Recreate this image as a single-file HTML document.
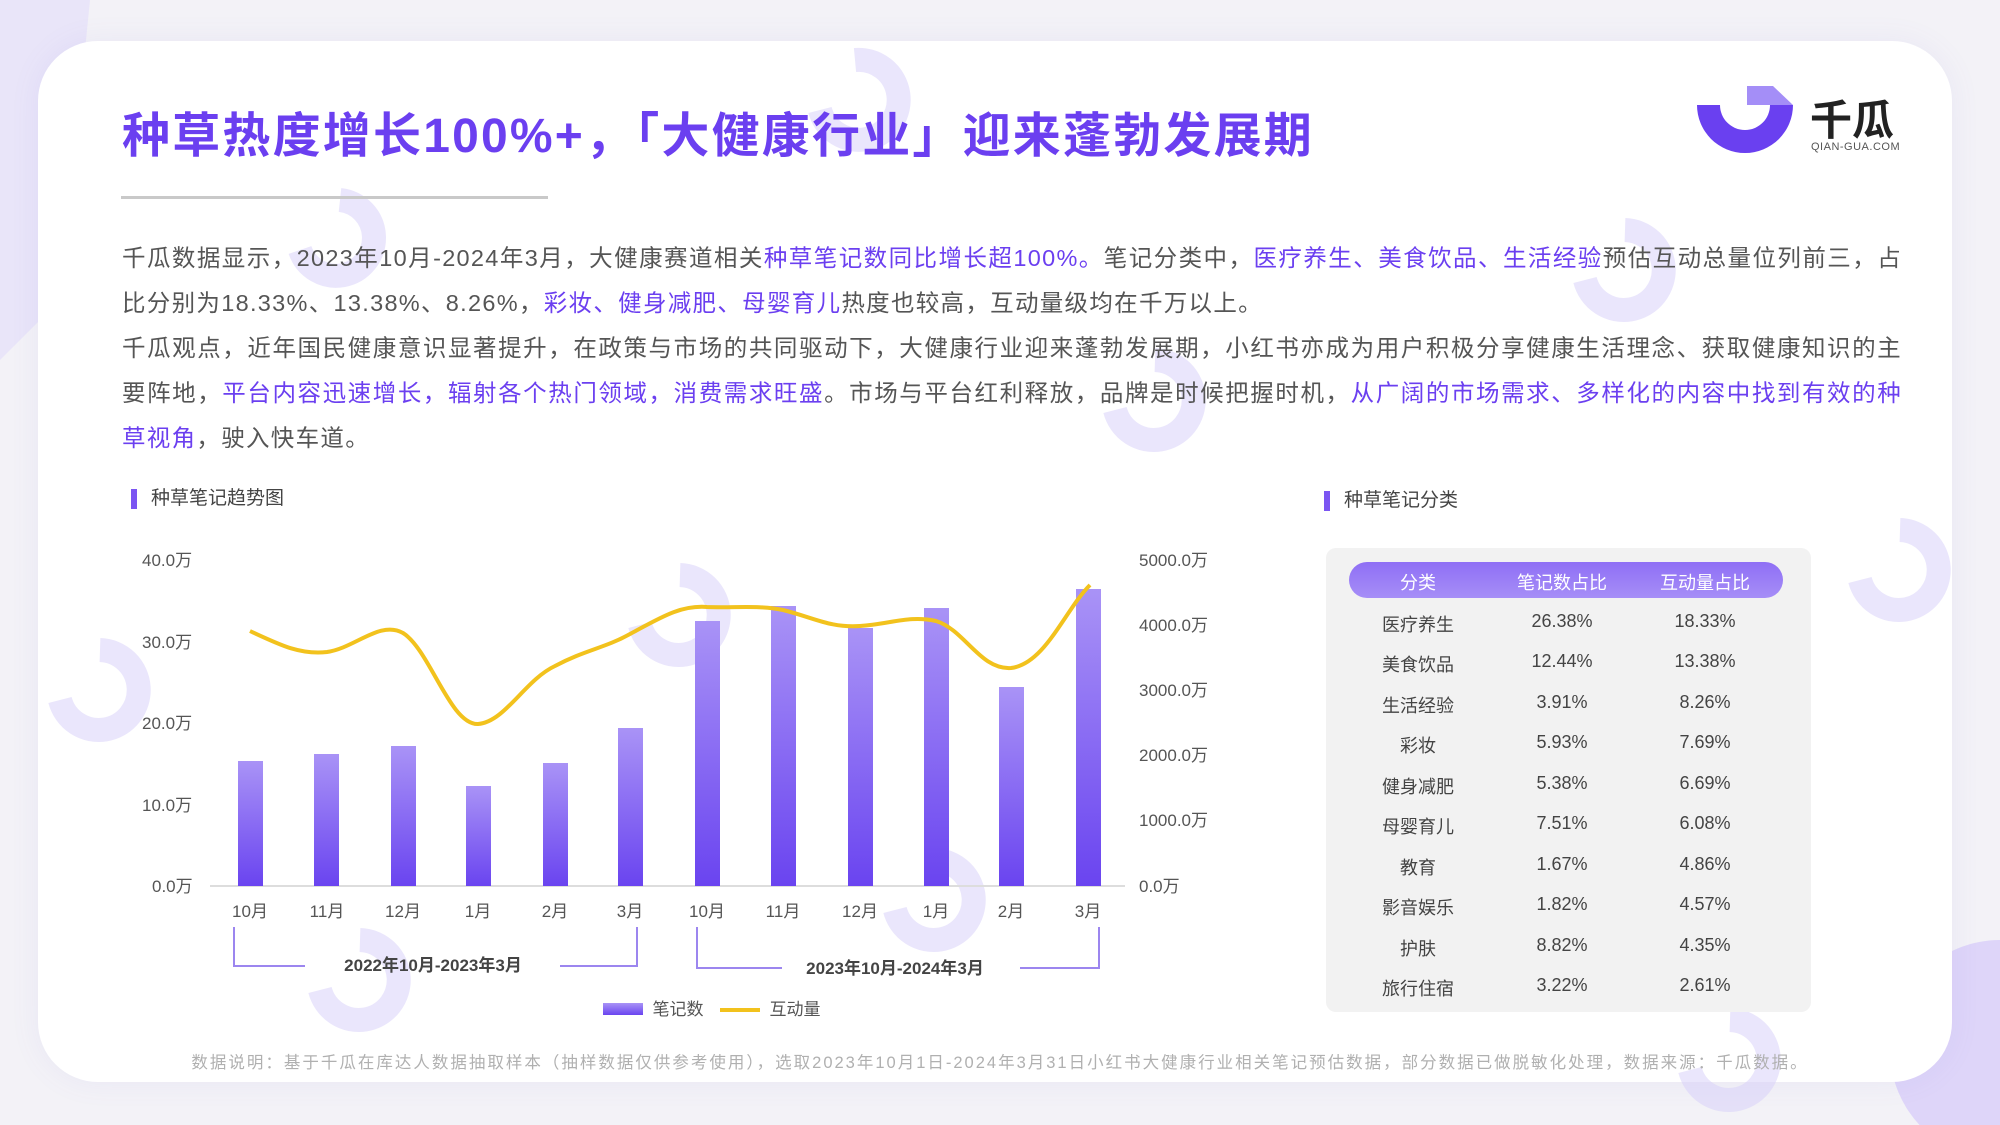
<!DOCTYPE html>
<html><head><meta charset="utf-8"><style>
*{margin:0;padding:0;box-sizing:border-box}
body{width:2000px;height:1125px;overflow:hidden;background:#f3f2f7;font-family:"Liberation Sans","Noto Sans CJK SC",sans-serif;position:relative}
.card{position:absolute;left:38px;top:41px;width:1914px;height:1041px;background:#fff;border-radius:60px;box-shadow:0 0 30px rgba(120,100,200,.08)}
.abs{position:absolute}
.title{left:122px;top:96px;font-size:48px;font-weight:bold;color:#6b3ff0;letter-spacing:2.2px;white-space:nowrap}
.uline{left:121px;top:196px;width:427px;height:3px;background:#c9c9c9}
.para{left:122px;top:236px;width:1780px;font-size:23.5px;line-height:45px;color:#555;text-align:justify;letter-spacing:1.3px}
.para b{font-weight:normal;color:#6b3ff0}
.sec{font-size:19px;color:#444;padding-left:14px;border-left:6px solid #7b55f2;line-height:20px}
.tbl{left:1326px;top:548px;width:485px;height:464px;background:#f2f2f2;border-radius:10px}
.hd{left:1349px;top:562px;width:434px;height:36px;border-radius:18px;background:linear-gradient(#8f6ff5,#a68ef7);color:#fff;font-size:18px}
.cell{position:absolute;width:160px;text-align:center;font-size:18px;color:#444;transform:translateX(-80px)}
.foot{left:0;width:2000px;top:1049px;text-align:center;font-size:16.5px;color:#b0b0b0;letter-spacing:2px}
</style></head><body>
<svg class="abs" style="left:0;top:0" width="2000" height="1125">
<path d="M0 0 L90 0 L60 300 L0 360Z" fill="#e3dcfa" opacity=".6"/>
<circle cx="2000" cy="1050" r="110" fill="#d8cdf9" opacity=".8"/>
</svg>
<div class="card"></div>
<svg class="abs" style="left:0;top:0" width="2000" height="1125" fill="none">
<g stroke="#d6cdf9" stroke-width="24" opacity=".5">
<path d="M340 200 A38 38 0 1 1 300 250"/>
<path d="M855 60 A40 40 0 1 1 820 110"/>
<path d="M1625 230 A40 40 0 1 1 1585 280"/>
<path d="M1155 360 A40 40 0 1 1 1115 410"/>
<path d="M680 575 A40 40 0 1 1 640 625"/>
<path d="M100 650 A40 40 0 1 1 60 700"/>
<path d="M1900 530 A40 40 0 1 1 1860 580"/>
<path d="M1430 720 A40 40 0 1 1 1390 770"/>
<path d="M935 860 A40 40 0 1 1 895 910"/>
<path d="M360 940 A40 40 0 1 1 320 990"/>
<path d="M1730 1020 A40 40 0 1 1 1690 1070"/>
</g>
</svg>
<div class="abs title">种草热度增长100%+，「大健康行业」迎来蓬勃发展期</div>
<div class="abs uline"></div>
<svg class="abs" style="left:1690px;top:80px" width="240" height="90">
<path d="M7 25 A48 48 0 0 0 103 25 L80 25 A25 25 0 0 1 30 25Z" fill="#6a40f0"/>
<path d="M57 6 L83 6 L103 25 L80 25 L66 25 L57 25Z" fill="#a48ef7"/>
<text x="120" y="55" font-size="42" font-weight="bold" fill="#222" font-family="Noto Sans CJK SC,sans-serif">千瓜</text>
<text x="121" y="70" font-size="11" fill="#555" letter-spacing=".5">QIAN-GUA.COM</text>
</svg>
<div class="abs para">千瓜数据显示，2023年10月-2024年3月，大健康赛道相关<b>种草笔记数同比增长超100%。</b>笔记分类中，<b>医疗养生、美食饮品、生活经验</b>预估互动总量位列前三，占比分别为18.33%、13.38%、8.26%，<b>彩妆、健身减肥、母婴育儿</b>热度也较高，互动量级均在千万以上。<br>千瓜观点，近年国民健康意识显著提升，在政策与市场的共同驱动下，大健康行业迎来蓬勃发展期，小红书亦成为用户积极分享健康生活理念、获取健康知识的主要阵地，<b>平台内容迅速增长，辐射各个热门领域，消费需求旺盛</b>。市场与平台红利释放，品牌是时候把握时机，<b>从广阔的市场需求、多样化的内容中找到有效的种草视角</b>，驶入快车道。</div>
<div class="abs sec" style="left:131px;top:489px">种草笔记趋势图</div>
<div class="abs sec" style="left:1324px;top:491px">种草笔记分类</div>
<svg class="abs" style="left:0;top:0" width="2000" height="1125">
<defs><linearGradient id="g" x1="0" y1="0" x2="0" y2="1"><stop offset="0" stop-color="#a993f6"/><stop offset="1" stop-color="#6a44f0"/></linearGradient></defs>
<g font-size="17" fill="#555" font-family="Liberation Sans,Noto Sans CJK SC,sans-serif">
<text x="142" y="566">40.0万</text><text x="142" y="648">30.0万</text><text x="142" y="729">20.0万</text><text x="142" y="811">10.0万</text><text x="152" y="892">0.0万</text>
<text x="1139" y="566">5000.0万</text><text x="1139" y="631">4000.0万</text><text x="1139" y="696">3000.0万</text><text x="1139" y="761">2000.0万</text><text x="1139" y="826">1000.0万</text><text x="1139" y="892">0.0万</text>
</g>
<line x1="210" y1="886" x2="1125" y2="886" stroke="#ddd" stroke-width="2"/>
<g fill="url(#g)">
<rect x="238" y="761" width="25" height="125"/><rect x="314" y="754" width="25" height="132"/><rect x="391" y="746" width="25" height="140"/><rect x="466" y="786" width="25" height="100"/><rect x="543" y="763" width="25" height="123"/><rect x="618" y="728" width="25" height="158"/><rect x="695" y="621" width="25" height="265"/><rect x="771" y="606" width="25" height="280"/><rect x="848" y="628" width="25" height="258"/><rect x="924" y="608" width="25" height="278"/><rect x="999" y="687" width="25" height="199"/><rect x="1076" y="589" width="25" height="297"/>
</g>
<path d="M250 631 C280 645 300 655 327 652 C355 648 380 620 403 633 C430 650 450 725 478 724 C505 722 525 680 555 666 C585 650 605 648 630 634 C660 618 680 605 707 607 C735 608 760 605 783 610 C815 618 830 628 860 626 C890 624 910 615 936 621 C965 630 980 670 1011 668 C1045 664 1065 610 1090 585" fill="none" stroke="#f2c21d" stroke-width="4"/>
<g font-size="17" fill="#555" text-anchor="middle" font-family="Liberation Sans,Noto Sans CJK SC,sans-serif">
<text x="250" y="917">10月</text><text x="327" y="917">11月</text><text x="403" y="917">12月</text><text x="478" y="917">1月</text><text x="555" y="917">2月</text><text x="630" y="917">3月</text><text x="707" y="917">10月</text><text x="783" y="917">11月</text><text x="860" y="917">12月</text><text x="936" y="917">1月</text><text x="1011" y="917">2月</text><text x="1088" y="917">3月</text>
<text x="433" y="971" font-weight="bold" fill="#444">2022年10月-2023年3月</text>
<text x="895" y="974" font-weight="bold" fill="#444">2023年10月-2024年3月</text>
<text x="678" y="1015">笔记数</text><text x="795" y="1015">互动量</text>
</g>
<g fill="none" stroke="#9c86ef" stroke-width="2">
<path d="M234 927 V966 H305"/><path d="M560 966 H637 V927"/>
<path d="M697 927 V968 H782"/><path d="M1020 968 H1099 V927"/>
</g>
<rect x="603" y="1003" width="40" height="12" fill="url(#g)"/>
<line x1="720" y1="1010" x2="760" y2="1010" stroke="#f2c21d" stroke-width="4"/>
</svg>
<div class="abs tbl"></div>
<div class="abs hd"></div>
<div style="position:absolute;left:0;top:0;width:2000px">
<div class="cell" style="left:1418px;top:569px;color:#fff">分类</div><div class="cell" style="left:1562px;top:569px;color:#fff">笔记数占比</div><div class="cell" style="left:1705px;top:569px;color:#fff">互动量占比</div>
</div>
<div style="position:absolute;left:0;top:0">
<div class="cell" style="left:1418px;top:611px">医疗养生</div><div class="cell" style="left:1562px;top:611px">26.38%</div><div class="cell" style="left:1705px;top:611px">18.33%</div>
<div class="cell" style="left:1418px;top:651px">美食饮品</div><div class="cell" style="left:1562px;top:651px">12.44%</div><div class="cell" style="left:1705px;top:651px">13.38%</div>
<div class="cell" style="left:1418px;top:692px">生活经验</div><div class="cell" style="left:1562px;top:692px">3.91%</div><div class="cell" style="left:1705px;top:692px">8.26%</div>
<div class="cell" style="left:1418px;top:732px">彩妆</div><div class="cell" style="left:1562px;top:732px">5.93%</div><div class="cell" style="left:1705px;top:732px">7.69%</div>
<div class="cell" style="left:1418px;top:773px">健身减肥</div><div class="cell" style="left:1562px;top:773px">5.38%</div><div class="cell" style="left:1705px;top:773px">6.69%</div>
<div class="cell" style="left:1418px;top:813px">母婴育儿</div><div class="cell" style="left:1562px;top:813px">7.51%</div><div class="cell" style="left:1705px;top:813px">6.08%</div>
<div class="cell" style="left:1418px;top:854px">教育</div><div class="cell" style="left:1562px;top:854px">1.67%</div><div class="cell" style="left:1705px;top:854px">4.86%</div>
<div class="cell" style="left:1418px;top:894px">影音娱乐</div><div class="cell" style="left:1562px;top:894px">1.82%</div><div class="cell" style="left:1705px;top:894px">4.57%</div>
<div class="cell" style="left:1418px;top:935px">护肤</div><div class="cell" style="left:1562px;top:935px">8.82%</div><div class="cell" style="left:1705px;top:935px">4.35%</div>
<div class="cell" style="left:1418px;top:975px">旅行住宿</div><div class="cell" style="left:1562px;top:975px">3.22%</div><div class="cell" style="left:1705px;top:975px">2.61%</div>
</div>
<div class="abs foot">数据说明：基于千瓜在库达人数据抽取样本（抽样数据仅供参考使用），选取2023年10月1日-2024年3月31日小红书大健康行业相关笔记预估数据，部分数据已做脱敏化处理，数据来源：千瓜数据。</div>
</body></html>
